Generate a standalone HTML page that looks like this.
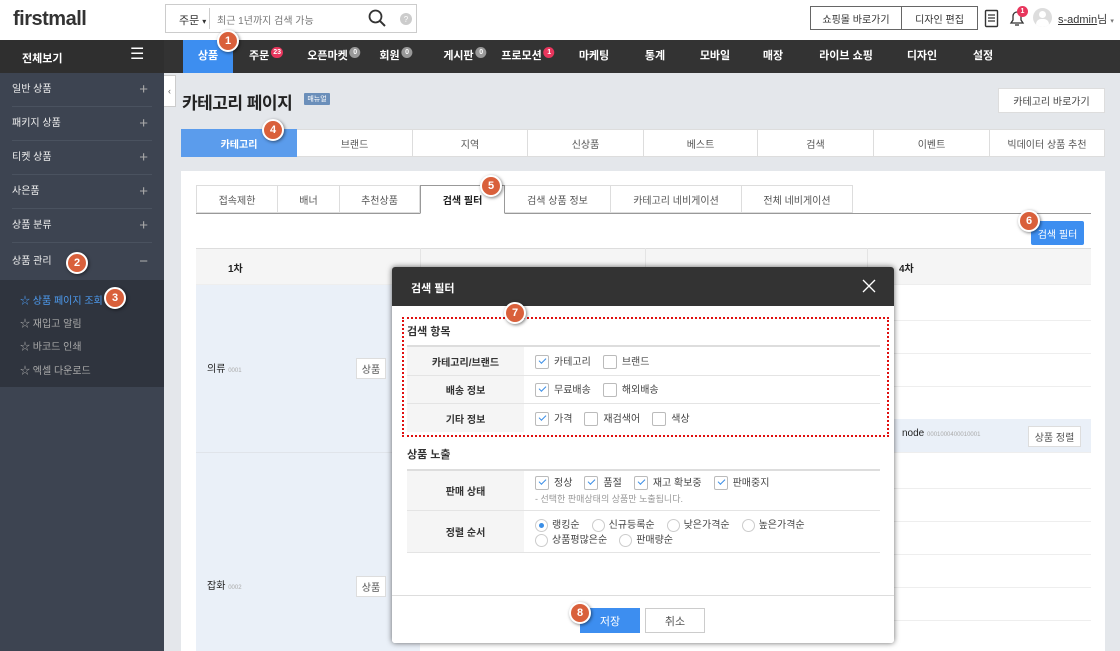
<!DOCTYPE html>
<html><head><meta charset="utf-8">
<style>
*{box-sizing:border-box;margin:0;padding:0}
body{width:1120px;height:651px;overflow:hidden;position:relative;font-family:"Liberation Sans","Noto Sans CJK KR",sans-serif;font-size:11px;color:#333;background:#e4e7eb}
.a{position:absolute}
.c{display:flex;align-items:center;justify-content:center}
.badge{position:absolute;width:22px;height:22px;border-radius:50%;background:#d9603b;color:#fff;font-size:11px;font-weight:bold;border:2px solid #fff;box-shadow:1px 1px 3px rgba(0,0,0,.5);display:flex;align-items:center;justify-content:center;z-index:20}
.nav span{position:absolute;top:0;height:33px;line-height:33px;color:#fff;font-size:11px;font-weight:bold;transform:translateX(-50%);white-space:nowrap}
.cnt{display:inline-block;min-width:11px;height:11px;border-radius:6px;background:#999;color:#fff;font-size:7px;line-height:11px;text-align:center;vertical-align:top;margin-top:7px;margin-left:2px;padding:0 2px}
.side div.it{position:absolute;left:12px;width:140px;height:34px;line-height:34px;color:#eee;font-size:10px;border-bottom:1px solid #4a525f}
.side div.it b{position:absolute;right:4px;font-weight:normal;font-size:15px;color:#aaa}
.sub{position:absolute;left:20px;color:#aaa;font-size:10px}
.t1{position:absolute;top:129px;height:28px;background:#fff;border:1px solid #ddd;border-left:none;font-size:10px;color:#555}
.t2{position:absolute;top:185px;height:28px;background:#fff;border:1px solid #ddd;border-left:none;font-size:10px;color:#555}
.cb{display:inline-block;width:14px;height:14px;border:1px solid #bbb;border-radius:2px;vertical-align:middle;margin-right:5px;position:relative;background:#fff}
.cb.on:after{content:"";position:absolute;left:3px;top:2px;width:6px;height:3px;border-left:1.5px solid #3a8ee6;border-bottom:1.5px solid #3a8ee6;transform:rotate(-45deg)}
.rd{display:inline-block;width:13px;height:13px;border:1px solid #ccc;border-radius:50%;vertical-align:middle;margin-right:4px;position:relative}
.rd.on:after{content:"";position:absolute;left:3px;top:3px;width:5px;height:5px;border-radius:50%;background:#3a8ee6}
.lab{position:absolute;left:15px;width:117px;background:#f5f5f5;font-size:10px;font-weight:bold;color:#333}
.val{position:absolute;left:143px;font-size:10px;color:#444}
.val span{margin-right:12px}
.hl{position:absolute;left:15px;width:473px;height:1px;background:#e4e4e4}
</style></head><body>
<!-- header -->
<div class="a" style="left:0;top:0;width:1120px;height:40px;background:#fff"></div>
<div class="a" style="left:13px;top:8px;font-size:20px;font-weight:bold;color:#333;letter-spacing:-0.5px">firstmall</div>
<div class="a" style="left:165px;top:4px;width:252px;height:29px;border:1px solid #ccc;background:#fff"></div>
<div class="a" style="left:179px;top:12px;font-size:11px;color:#333;white-space:nowrap">주문 <span style="font-size:8px">▾</span></div>
<div class="a" style="left:209px;top:8px;width:1px;height:21px;background:#ccc"></div>
<div class="a" style="left:217px;top:12px;font-size:10px;color:#777">최근 1년까지 검색 가능</div>
<svg class="a" style="left:368px;top:9px" width="18" height="18" viewBox="0 0 18 18"><circle cx="7.5" cy="7.5" r="6" fill="none" stroke="#333" stroke-width="1.8"/><path d="M12 12l5 5" stroke="#333" stroke-width="2"/></svg>
<div class="a c" style="left:400px;top:13px;width:12px;height:12px;border-radius:50%;background:#ccc;color:#fff;font-size:8px">?</div>
<div class="a c" style="left:810px;top:6px;width:92px;height:24px;border:1px solid #666;font-size:10px;background:#fff">쇼핑몰 바로가기</div>
<div class="a c" style="left:901px;top:6px;width:77px;height:24px;border:1px solid #666;font-size:10px;background:#fff">디자인 편집</div>
<svg class="a" style="left:984px;top:9px" width="16" height="20" viewBox="0 0 16 20"><rect x="1.5" y="1.5" width="12" height="16" rx="1" fill="none" stroke="#333" stroke-width="1.4"/><path d="M4 6h7M4 9h7M4 12h7" stroke="#333" stroke-width="1.2"/></svg>
<svg class="a" style="left:1008px;top:8px" width="18" height="20" viewBox="0 0 18 20"><path d="M3 15h12l-2-3V8a4 4 0 0 0-8 0v4z" fill="none" stroke="#333" stroke-width="1.3"/><path d="M7 17h4" stroke="#333" stroke-width="1.3"/></svg>
<div class="a c" style="left:1017px;top:6px;width:11px;height:11px;border-radius:50%;background:#e8365d;color:#fff;font-size:7px;font-weight:bold">1</div>
<div class="a" style="left:1033px;top:8px;width:19px;height:19px;border-radius:50%;background:#ddd;overflow:hidden"><div style="position:absolute;left:6px;top:3px;width:7px;height:7px;border-radius:50%;background:#fff"></div><div style="position:absolute;left:3px;top:11px;width:13px;height:10px;border-radius:6px;background:#fff"></div></div>
<div class="a" style="left:1058px;top:11px;font-size:11px;color:#333;white-space:nowrap"><u>s-admin</u>님 <span style="font-size:7px;color:#777">▾</span></div>
<!-- nav -->
<div class="a" style="left:0;top:40px;width:1120px;height:33px;background:#333"></div>
<div class="a" style="left:0;top:40px;width:164px;height:33px;background:#2f2f2f"></div>
<div class="a" style="left:22px;top:50px;color:#fff;font-size:11px;font-weight:bold">전체보기</div>
<div class="a" style="left:130px;top:44px;color:#fff;font-size:16px">☰</div>
<div class="a" style="left:183px;top:40px;width:50px;height:33px;background:#3d8ef0"></div>
<div class="nav a" style="left:0;top:40px;width:1120px;height:33px">
<span style="left:208px">상품</span>
<span style="left:266px">주문<i class="cnt" style="background:#e8365d;font-style:normal">23</i></span>
<span style="left:334px">오픈마켓<i class="cnt" style="font-style:normal">0</i></span>
<span style="left:396px">회원<i class="cnt" style="font-style:normal">0</i></span>
<span style="left:465px">게시판<i class="cnt" style="font-style:normal">0</i></span>
<span style="left:528px">프로모션<i class="cnt" style="background:#e8365d;font-style:normal">1</i></span>
<span style="left:594px">마케팅</span>
<span style="left:655px">통계</span>
<span style="left:715px">모바일</span>
<span style="left:773px">매장</span>
<span style="left:846px">라이브 쇼핑</span>
<span style="left:922px">디자인</span>
<span style="left:983px">설정</span>
</div>
<div class="badge" style="left:217px;top:30px">1</div>
<!-- sidebar -->
<div class="side a" style="left:0;top:73px;width:164px;height:578px;background:#3d4451">
<div class="it" style="top:0">일반 상품<b>+</b></div>
<div class="it" style="top:34px">패키지 상품<b>+</b></div>
<div class="it" style="top:68px">티켓 상품<b>+</b></div>
<div class="it" style="top:102px">사은품<b>+</b></div>
<div class="it" style="top:136px">상품 분류<b>+</b></div>
<div class="it" style="top:172px;border:none">상품 관리<b>−</b></div>
<div class="a" style="left:0;top:207px;width:164px;height:107px;background:#2f343e"></div>
<div class="sub" style="top:219px;color:#4d9bf0">☆ 상품 페이지 조회</div>
<div class="sub" style="top:242px">☆ 재입고 알림</div>
<div class="sub" style="top:265px">☆ 바코드 인쇄</div>
<div class="sub" style="top:289px">☆ 엑셀 다운로드</div>
</div>
<div class="badge" style="left:66px;top:252px">2</div>
<div class="badge" style="left:104px;top:287px">3</div>
<!-- content -->
<div class="a c" style="left:164px;top:75px;width:12px;height:32px;background:#fff;border:1px solid #ccc;border-left:none;font-size:9px;color:#666">‹</div>
<div class="a" style="left:182px;top:89px;font-size:17px;font-weight:bold;color:#222;letter-spacing:-0.5px">카테고리 페이지</div>
<div class="a c" style="left:304px;top:93px;width:26px;height:12px;background:#6b8fba;color:#fff;font-size:7px;border-radius:1px">매뉴얼</div>
<div class="a c" style="left:998px;top:88px;width:107px;height:25px;background:#fff;border:1px solid #ddd;font-size:10px;color:#444">카테고리 바로가기</div>
<div class="a c" style="left:181px;top:129px;width:116px;height:28px;background:#5b9cec;color:#fff;font-size:10px;font-weight:bold">카테고리</div>
<div class="t1 c" style="left:297px;width:116px">브랜드</div>
<div class="t1 c" style="left:413px;width:115px">지역</div>
<div class="t1 c" style="left:528px;width:116px">신상품</div>
<div class="t1 c" style="left:644px;width:114px">베스트</div>
<div class="t1 c" style="left:758px;width:116px">검색</div>
<div class="t1 c" style="left:874px;width:116px">이벤트</div>
<div class="t1 c" style="left:990px;width:115px">빅데이터 상품 추천</div>
<div class="badge" style="left:262px;top:119px">4</div>
<div class="a" style="left:181px;top:171px;width:924px;height:480px;background:#fff"></div>
<div class="t2 c" style="left:196px;width:82px;border-left:1px solid #ddd">접속제한</div>
<div class="t2 c" style="left:278px;width:62px">배너</div>
<div class="t2 c" style="left:340px;width:80px">추천상품</div>
<div class="t2 c" style="left:420px;width:85px;border:1px solid #999;border-bottom:1px solid #fff;color:#222;font-weight:bold;height:29px;z-index:2">검색 필터</div>
<div class="t2 c" style="left:505px;width:106px">검색 상품 정보</div>
<div class="t2 c" style="left:611px;width:131px">카테고리 네비게이션</div>
<div class="t2 c" style="left:742px;width:111px">전체 네비게이션</div>
<div class="a" style="left:196px;top:213px;width:895px;height:1px;background:#999"></div>
<div class="badge" style="left:480px;top:175px">5</div>
<div class="a c" style="left:1031px;top:221px;width:53px;height:24px;background:#3d8ef0;color:#fff;font-size:10px;border-radius:2px">검색 필터</div>
<div class="badge" style="left:1018px;top:210px">6</div>
<!-- table -->
<div class="a" style="left:196px;top:248px;width:895px;height:37px;background:#f5f5f5;border-top:1px solid #ddd;border-bottom:1px solid #eee"></div>
<div class="a" style="left:228px;top:260px;font-size:10px;font-weight:bold;color:#222">1차</div>
<div class="a" style="left:899px;top:260px;font-size:10px;font-weight:bold;color:#222">4차</div>
<div class="a" style="left:420px;top:248px;width:1px;height:37px;background:#e4e4e4"></div>
<div class="a" style="left:645px;top:248px;width:1px;height:37px;background:#e4e4e4"></div>
<div class="a" style="left:867px;top:248px;width:1px;height:37px;background:#e4e4e4"></div>
<div class="a" style="left:196px;top:285px;width:224px;height:366px;background:#eaf0f8"></div>
<div class="a" style="left:196px;top:452px;width:224px;height:1px;background:#e0e4ea"></div>
<div class="a" style="left:207px;top:360px;font-size:10px;color:#222">의류 <span style="font-size:6px;color:#aaa">0001</span></div>
<div class="a c" style="left:356px;top:358px;width:30px;height:21px;background:#fff;border:1px solid #ddd;font-size:10px;color:#555">상품</div>
<div class="a" style="left:207px;top:577px;font-size:10px;color:#222">잡화 <span style="font-size:6px;color:#aaa">0002</span></div>
<div class="a c" style="left:356px;top:576px;width:30px;height:21px;background:#fff;border:1px solid #ddd;font-size:10px;color:#555">상품</div>
<div class="a" style="left:868px;top:419px;width:223px;height:33px;background:#eaf0f8"></div>
<div class="a" style="left:868px;top:320px;width:223px;height:1px;background:#eee"></div>
<div class="a" style="left:868px;top:353px;width:223px;height:1px;background:#eee"></div>
<div class="a" style="left:868px;top:386px;width:223px;height:1px;background:#eee"></div>
<div class="a" style="left:868px;top:452px;width:223px;height:1px;background:#eee"></div>
<div class="a" style="left:868px;top:488px;width:223px;height:1px;background:#eee"></div>
<div class="a" style="left:868px;top:521px;width:223px;height:1px;background:#eee"></div>
<div class="a" style="left:868px;top:554px;width:223px;height:1px;background:#eee"></div>
<div class="a" style="left:868px;top:587px;width:223px;height:1px;background:#eee"></div>
<div class="a" style="left:868px;top:620px;width:223px;height:1px;background:#eee"></div>
<div class="a" style="left:902px;top:428px;font-size:10px;color:#222">node <span style="font-size:6px;color:#aaa">0001000400010001</span></div>
<div class="a c" style="left:1028px;top:426px;width:53px;height:21px;background:#fff;border:1px solid #ddd;font-size:10px;color:#555">상품 정렬</div>
<!-- modal -->
<div class="a" style="left:392px;top:267px;width:502px;height:376px;background:#fff;border-radius:3px;box-shadow:0 0 6px rgba(0,0,0,.6);overflow:hidden;z-index:10">
<div class="a" style="left:0;top:0;width:502px;height:39px;background:#333"></div>
<div class="a" style="left:19px;top:13px;color:#fff;font-size:11px;font-weight:bold">검색 필터</div>
<svg class="a" style="left:470px;top:12px" width="14" height="14" viewBox="0 0 14 14"><path d="M1 1l12 12M13 1L1 13" stroke="#fff" stroke-width="1.3"/></svg>
<div class="a" style="left:10px;top:50px;width:487px;height:120px;border:2px dotted #e01010"></div>
<div class="a" style="left:15px;top:56px;font-size:11px;font-weight:bold;color:#333">검색 항목</div>
<div class="hl" style="top:78px;height:2px;background:#ddd"></div>
<div class="lab c" style="top:80px;height:28px">카테고리/브랜드</div>
<div class="val" style="top:86px"><i class="cb on"></i><span>카테고리</span><i class="cb"></i><span>브랜드</span></div>
<div class="hl" style="top:108px"></div>
<div class="lab c" style="top:109px;height:27px">배송 정보</div>
<div class="val" style="top:114px"><i class="cb on"></i><span>무료배송</span><i class="cb"></i><span>해외배송</span></div>
<div class="hl" style="top:136px"></div>
<div class="lab c" style="top:137px;height:28px">기타 정보</div>
<div class="val" style="top:143px"><i class="cb on"></i><span>가격</span><i class="cb"></i><span>재검색어</span><i class="cb"></i><span>색상</span></div>
<div class="a" style="left:15px;top:179px;font-size:11px;font-weight:bold;color:#333">상품 노출</div>
<div class="hl" style="top:202px;height:2px;background:#ddd"></div>
<div class="lab c" style="top:204px;height:39px">판매 상태</div>
<div class="val" style="top:207px"><i class="cb on"></i><span>정상</span><i class="cb on"></i><span>품절</span><i class="cb on"></i><span>재고 확보중</span><i class="cb on"></i><span>판매중지</span></div>
<div class="val" style="top:225px;color:#999;font-size:9px">- 선택한 판매상태의 상품만 노출됩니다.</div>
<div class="hl" style="top:243px"></div>
<div class="lab c" style="top:244px;height:41px">정렬 순서</div>
<div class="val" style="top:249px"><i class="rd on"></i><span>랭킹순</span><i class="rd"></i><span>신규등록순</span><i class="rd"></i><span>낮은가격순</span><i class="rd"></i><span>높은가격순</span></div>
<div class="val" style="top:264px"><i class="rd"></i><span>상품평많은순</span><i class="rd"></i><span>판매량순</span></div>
<div class="hl" style="top:285px"></div>
<div class="a" style="left:0;top:328px;width:502px;height:48px;border-top:1px solid #ddd;background:#fff"></div>
<div class="a c" style="left:188px;top:341px;width:60px;height:25px;background:#3d8ef0;color:#fff;font-size:11px">저장</div>
<div class="a c" style="left:253px;top:341px;width:60px;height:25px;background:#fff;border:1px solid #ccc;color:#555;font-size:11px">취소</div>
</div>
<div class="badge" style="left:504px;top:302px">7</div>
<div class="badge" style="left:569px;top:602px">8</div>
</body></html>
